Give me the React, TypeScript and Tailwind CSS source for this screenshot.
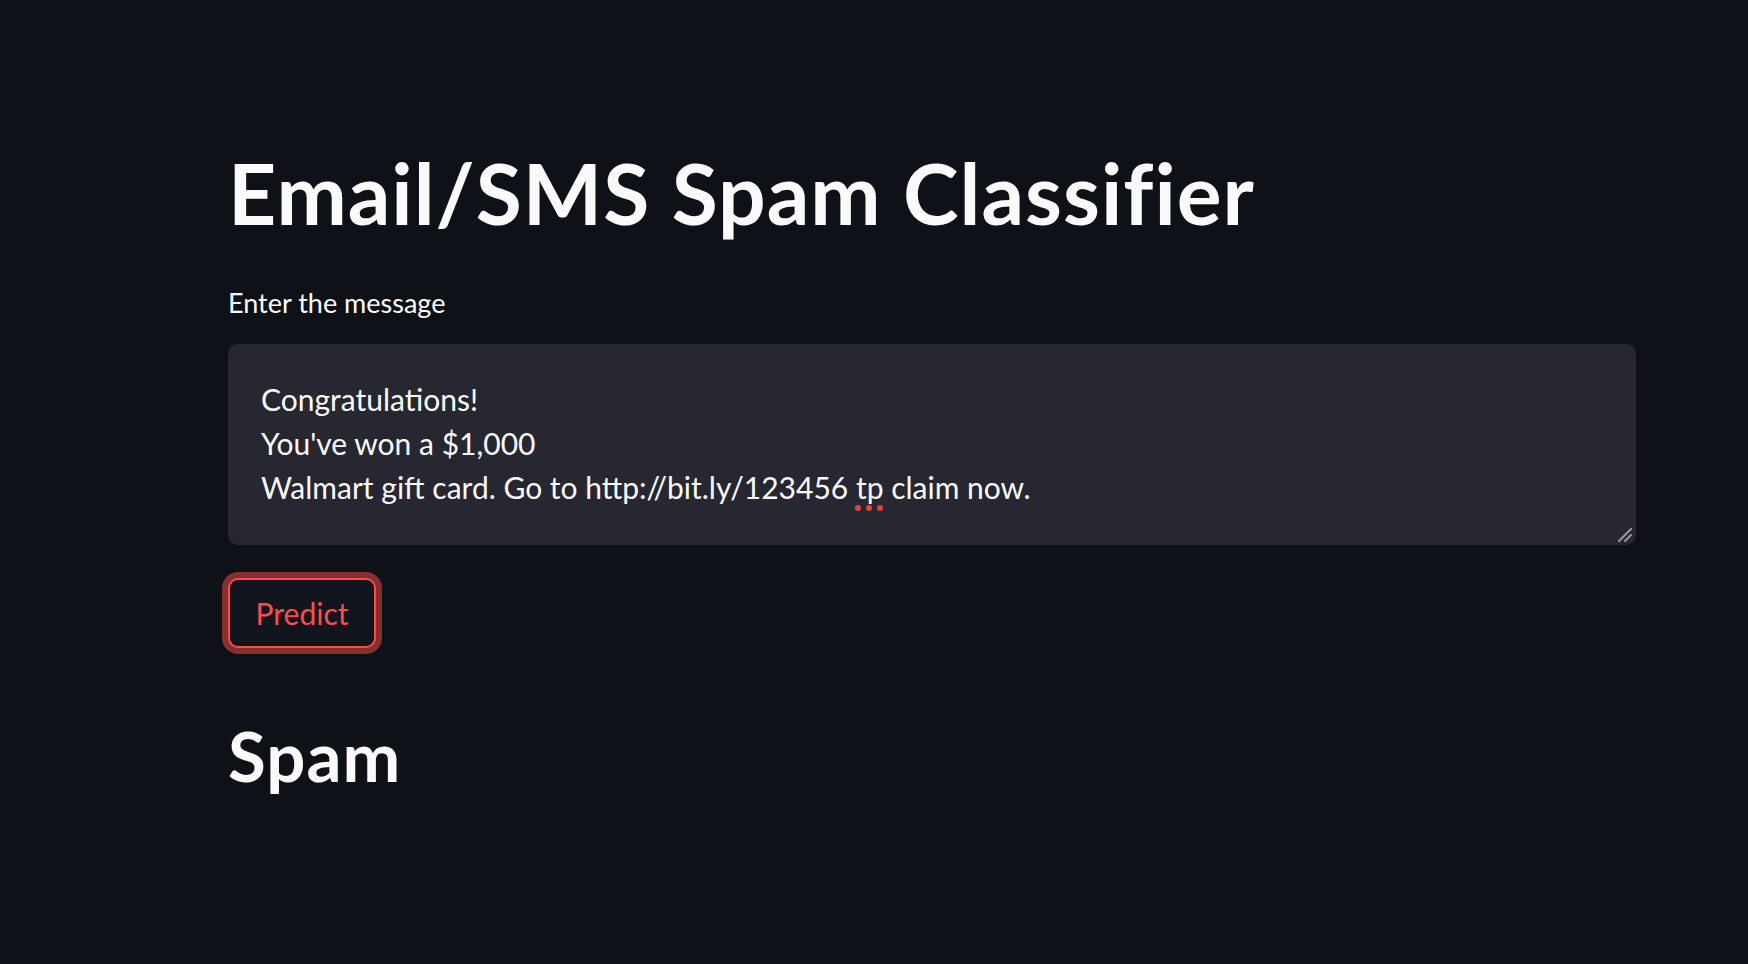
import React from "react";

const message = [
  "Congratulations!",
  "You've won a $1,000",
];

function ResizeHandle() {
  return (
    <svg
      className="absolute bottom-[3px] right-[4px]"
      width="14"
      height="14"
      viewBox="0 0 14 14"
    >
      <path d="M1 13 L13 1" stroke="#9a9aa3" strokeWidth="2" strokeLinecap="round" />
      <path d="M7 13 L13 7" stroke="#9a9aa3" strokeWidth="2" strokeLinecap="round" />
    </svg>
  );
}

export default function App() {
  return (
    <div className="min-h-screen w-full bg-[#0e1117] font-['Lato',sans-serif] text-[#fafafa]">
      <main className="flex w-[1636px] flex-col pl-[228px] pt-[143px]">
        {/* Title */}
        <h1 className="text-[84px] font-bold leading-[1.2] tracking-[1px]">
          Email/SMS Spam Classifier
        </h1>

        {/* Text area */}
        <label className="mt-[43px] text-[27px] leading-[1.2]">
          Enter the message
        </label>
        <div className="relative mt-[25px] h-[201px] w-full rounded-[10px] bg-[#262730] px-[33px] pt-[33px] text-[30px] leading-[44px]">
          {message.map((line) => (
            <div key={line}>{line}</div>
          ))}
          <div>
            Walmart gift card. Go to http://bit.ly/123456{" "}
            <span className="underline decoration-[#e0443e] decoration-dotted decoration-[6px] underline-offset-[6px]">
              tp
            </span>{" "}
            claim now.
          </div>
          <ResizeHandle />
        </div>

        {/* Predict button */}
        <div className="mt-[33px]">
          <button className="flex h-[70px] w-[148px] items-center justify-center rounded-[10px] border-2 border-[#ff4b4b] bg-[#12151d] text-[30px] text-[#ff4b4b] shadow-[0_0_0_6px_rgba(255,75,75,0.5)]">
            Predict
          </button>
        </div>

        {/* Result */}
        <h2 className="mt-[67px] text-[69px] font-bold leading-[1.2] tracking-[1px]">
          Spam
        </h2>
      </main>
    </div>
  );
}
